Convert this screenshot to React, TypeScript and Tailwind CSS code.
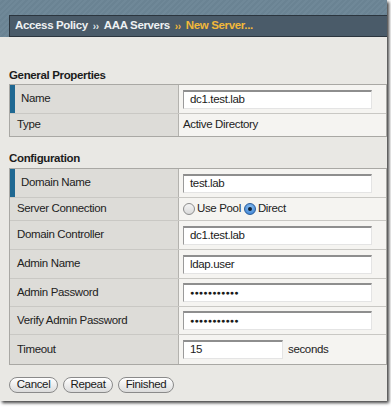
const font = { fontFamily: '"Liberation Sans", Arial, sans-serif' };

type Row = {
  label: string;
  required?: boolean;
  h: number;
  value: React.ReactNode;
};

const Input = ({ value, w = 'w-[189px]', dots }: { value: string; w?: string; dots?: boolean }) => (
  <div
    className={`${w} h-[19px] bg-white border-t-2 border-l border-t-[#8e8e8e] border-l-[#9a9a9a] border-r border-b border-r-[#e4e4e4] border-b-[#e4e4e4] flex items-center pl-[6px] text-[#1a1a1a] ${
      dots ? 'text-[7px] tracking-[0.2px]' : 'text-[11.5px]'
    }`}>
    {value}
  </div>
);

const Radio = ({ checked }: { checked?: boolean }) =>
  checked ? (
    <span className="w-[12px] h-[12px] rounded-full border border-[#2a5d9a] bg-[radial-gradient(circle_at_50%_35%,#8ec2f2,#2f78d0)] flex items-center justify-center">
      <span className="w-[4px] h-[4px] rounded-full bg-[#0d1f33]" />
    </span>
  ) : (
    <span className="w-[12px] h-[12px] rounded-full border border-[#8c8c8c] bg-[linear-gradient(#f4f4f4,#dadada)]" />
  );

const Table = ({ rows }: { rows: Row[] }) => (
  <div className="border border-[#a9a8a4] w-[378px]">
    {rows.map((row, idx) => (
      <div
        key={'row-' + idx}
        className={`flex ${idx < rows.length - 1 ? 'border-b border-[#c9c8c4]' : ''}`}
        style={{ height: row.h }}>
        <div className="w-[169px] bg-[#dddcd8] border-r border-[#b3b2ae] flex items-center">
          {row.required && <div className="w-[5px] self-stretch bg-[#1f6892]" />}
          <span className={row.required ? 'pl-[6px]' : 'pl-[7px]'}>{row.label}</span>
        </div>
        <div className="flex-1 bg-[#f5f4f1] flex items-center pl-[4px]">{row.value}</div>
      </div>
    ))}
  </div>
);

const Button = ({ label, w }: { label: string; w: string }) => (
  <div
    className={`${w} h-[16px] rounded-full border border-[#8a8a8a] bg-[linear-gradient(#ffffff,#dcdcdc)] flex items-center justify-center text-[11.5px] text-[#1a1a1a]`}>
    {label}
  </div>
);

export default function App() {
  const general: Row[] = [
    { label: 'Name', required: true, h: 29, value: <Input value="dc1.test.lab" /> },
    { label: 'Type', h: 22, value: <span>Active Directory</span> },
  ];

  const config: Row[] = [
    { label: 'Domain Name', required: true, h: 29, value: <Input value="test.lab" /> },
    {
      label: 'Server Connection',
      h: 23,
      value: (
        <div className="flex items-center">
          <Radio />
          <span className="ml-[2px]">Use Pool</span>
          <span className="ml-[3px]" />
          <Radio checked />
          <span className="ml-[2px]">Direct</span>
        </div>
      ),
    },
    { label: 'Domain Controller', h: 29, value: <Input value="dc1.test.lab" /> },
    { label: 'Admin Name', h: 29, value: <Input value="ldap.user" /> },
    { label: 'Admin Password', h: 28, value: <Input value="●●●●●●●●●●●" dots /> },
    { label: 'Verify Admin Password', h: 28, value: <Input value="●●●●●●●●●●●" dots /> },
    {
      label: 'Timeout',
      h: 29,
      value: (
        <div className="flex items-center">
          <Input value="15" w="w-[100px]" />
          <span className="ml-[5px]">seconds</span>
        </div>
      ),
    },
  ];

  return (
    <div className="w-[391px] h-[407px] bg-white" style={font}>
      <div className="w-[387px] h-[401px] bg-[#e9e8e4] shadow-[2px_2px_3px_rgba(0,0,0,0.75)] flex flex-col text-[11.5px] tracking-[-0.35px] text-[#222]">
        <div className="h-[37px] pt-[15px] pl-[9px] bg-[repeating-linear-gradient(135deg,#6f8898_0px,#6f8898_2px,#6a8393_2px,#6a8393_4px)]">
          <div className="h-[22px] bg-[#4a5b69] border border-[#2b353e] border-r-0 flex items-center pl-[5px] font-bold text-[11.5px] text-[#eef1f3]">
            <span>Access Policy</span>
            <span className="mx-[5px] text-[10px] text-[#dfe4e8]">››</span>
            <span>AAA Servers</span>
            <span className="mx-[5px] text-[10px] text-[#f2b83a]">››</span>
            <span className="text-[#f2b83a]">New Server...</span>
          </div>
        </div>

        <div className="pl-[9px] pt-[30px] flex flex-col">
          <h2 className="h-[16px] font-bold text-[11.5px] text-[#1c1c1c] mb-[1px]">General Properties</h2>
          <Table rows={general} />

          <h2 className="h-[16px] mt-[13px] mb-[2px] font-bold text-[11.5px] text-[#1c1c1c]">Configuration</h2>
          <Table rows={config} />

          <div className="flex gap-[5px] mt-[12px]">
            <Button label="Cancel" w="w-[49px]" />
            <Button label="Repeat" w="w-[50px]" />
            <Button label="Finished" w="w-[56px]" />
          </div>
        </div>
      </div>
    </div>
  );
}
